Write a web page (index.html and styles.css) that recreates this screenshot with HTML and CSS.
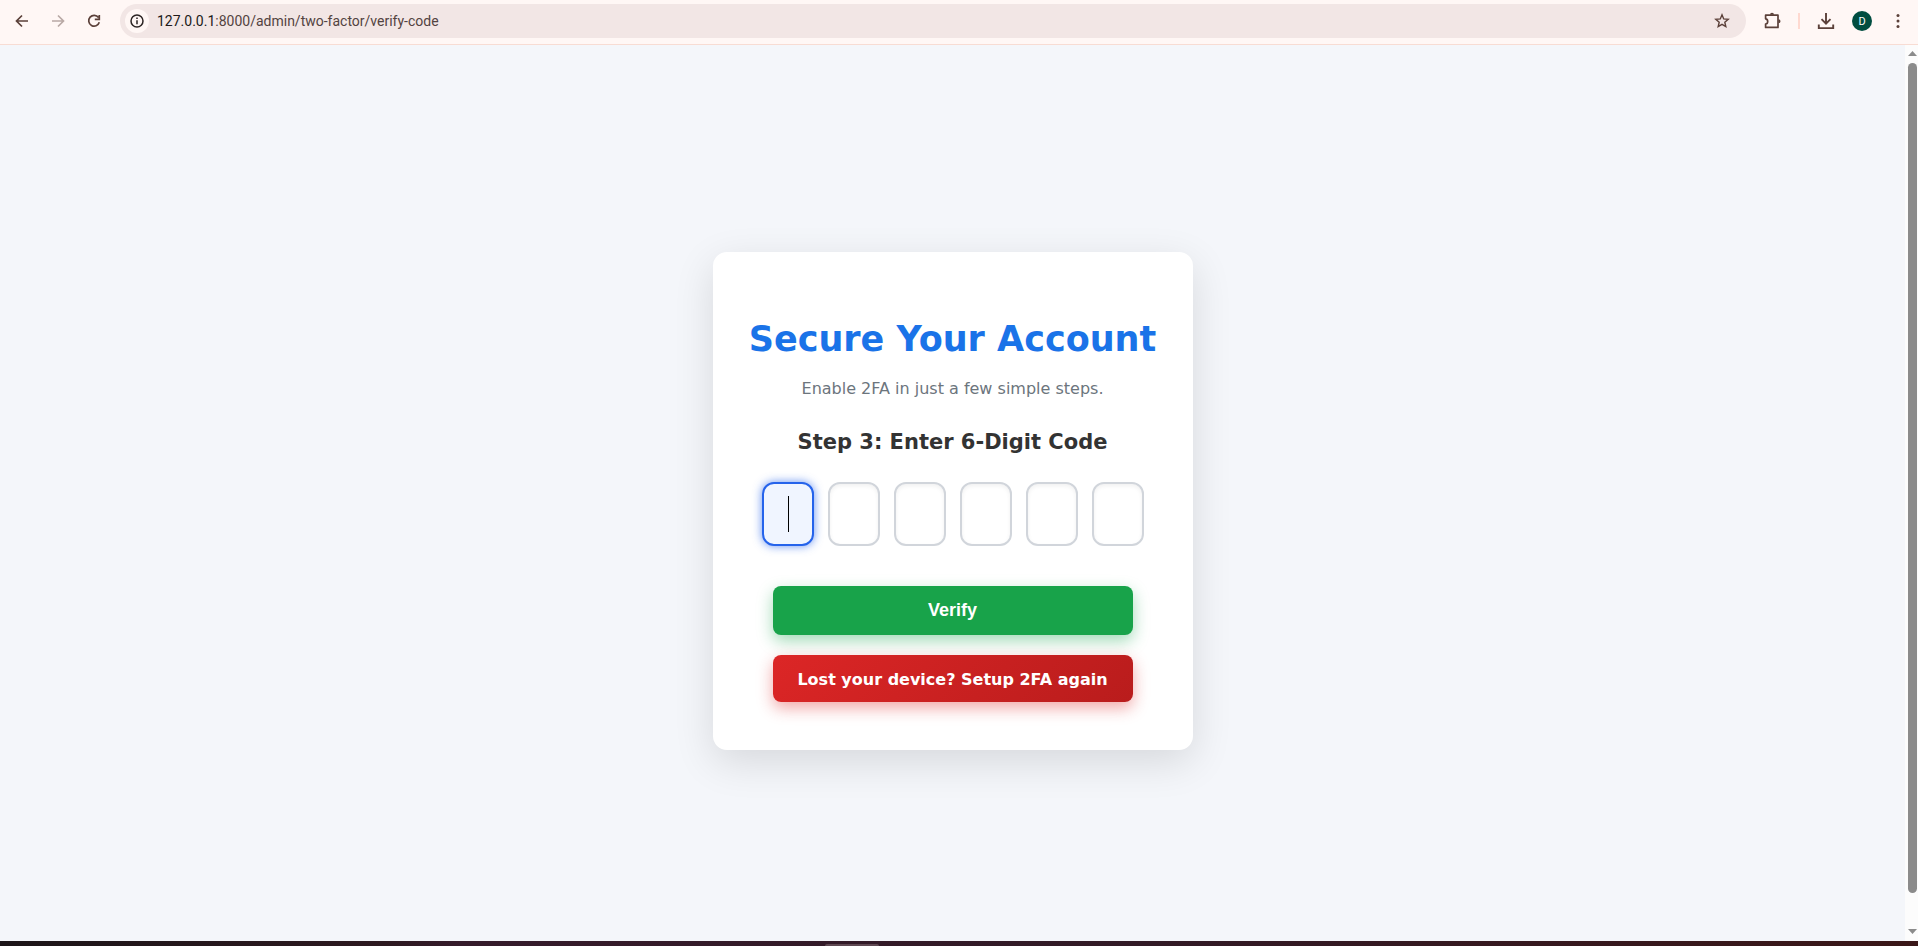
FILE: index.html
```
<!DOCTYPE html>
<html lang="en">
<head>
    <meta charset="UTF-8">
    <meta name="viewport" content="width=device-width, initial-scale=1.0">
    <title>Verify Code</title>
    <link rel="stylesheet" href="styles.css">
</head>
<body>

    <header class="toolbar">
        <nav class="nav-buttons">
            <button type="button" class="icon-btn" aria-label="Back">
                <svg width="20" height="20" viewBox="0 0 20 20" fill="none" stroke="currentColor" stroke-width="1.7"><path d="M16 10H5M10 4.5L4.5 10l5.500 5.500"/></svg>
            </button>
            <button type="button" class="icon-btn disabled" aria-label="Forward">
                <svg width="20" height="20" viewBox="0 0 20 20" fill="none" stroke="currentColor" stroke-width="1.7"><path d="M4 10h11M10 4.500l5.500 5.500-5.500 5.500"/></svg>
            </button>
            <button type="button" class="icon-btn" aria-label="Reload">
                <svg width="20" height="20" viewBox="0 0 20 20" fill="none" stroke="currentColor" stroke-width="1.7"><path d="M14.500 6.500A5.400 5.400 0 1 0 15.300 11.300M15.300 4v4.300h-4.500"/></svg>
            </button>
        </nav>
        <div class="address-bar">
            <button type="button" class="site-info" aria-label="Site information">
                <svg width="16" height="16" viewBox="0 0 16 16" fill="none" stroke="currentColor" stroke-width="1.5"><circle cx="8" cy="8" r="6"/><path d="M8 7.300v4M8 4.500v1.500"/></svg>
            </button>
            <p class="url"><span class="host">127.0.0.1</span>:8000/admin/two-factor/verify-code</p>
            <button type="button" class="icon-btn" aria-label="Bookmark">
                <svg width="20" height="20" viewBox="0 0 20 20" fill="none" stroke="currentColor" stroke-width="1.4"><path d="M10 3.800l1.700 4.100 4.500.4-3.400 2.900 1 4.400-3.800-2.300-3.800 2.300 1-4.400-3.400-2.900 4.500-.4z"/></svg>
            </button>
        </div>
        <div class="actions">
            <button type="button" class="icon-btn" aria-label="Extensions">
                <svg width="20" height="20" viewBox="0 0 20 20" fill="none" stroke="currentColor" stroke-width="1.7"><path d="M3.600 4.200H16V16.400H3.600V13C6.400 12.600 6.400 8.200 3.600 7.800Z" stroke-linejoin="round"/><path d="M8 3.800a2 2 0 0 1 4 0zM16.500 8.200a2 2 0 0 1 0 4z" fill="currentColor" stroke="none"/></svg>
            </button>
            <span class="divider"></span>
            <button type="button" class="icon-btn" aria-label="Downloads">
                <svg width="20" height="20" viewBox="0 0 20 20" fill="none" stroke="currentColor" stroke-width="1.9"><path d="M10 2v10.500M5.500 8.200l4.500 4.500 4.500-4.500M2.800 13.500v3.600h14.400v-3.600"/></svg>
            </button>
            <button type="button" class="avatar">D</button>
            <button type="button" class="icon-btn" aria-label="Menu">
                <svg width="20" height="20" viewBox="0 0 20 20" fill="currentColor"><circle cx="10" cy="4.500" r="1.500"/><circle cx="10" cy="10" r="1.500"/><circle cx="10" cy="15.500" r="1.500"/></svg>
            </button>
        </div>
    </header>

    <div class="viewport">
        <main class="page">
            <div class="card">
                <h1>Secure Your Account</h1>
                <p class="subtitle">Enable 2FA in just a few simple steps.</p>
                <h2>Step 3: Enter 6-Digit Code</h2>
                <form id="verifyForm">
                    <div class="code-inputs">
                        <input type="text" class="code-input active" maxlength="1" aria-label="Digit 1">
                        <input type="text" class="code-input" maxlength="1" aria-label="Digit 2">
                        <input type="text" class="code-input" maxlength="1" aria-label="Digit 3">
                        <input type="text" class="code-input" maxlength="1" aria-label="Digit 4">
                        <input type="text" class="code-input" maxlength="1" aria-label="Digit 5">
                        <input type="text" class="code-input" maxlength="1" aria-label="Digit 6">
                    </div>
                    <button type="submit" class="verify-btn">Verify</button>
                </form>
                <a href="#" class="reset-btn">Lost your device? Setup 2FA again</a>
            </div>
        </main>
        <div class="scrollbar">
            <svg width="9" height="5" viewBox="0 0 9 5"><path d="M0 5L4.500 0 9 5z"/></svg>
            <div class="track"><div class="thumb"></div></div>
            <svg width="9" height="5" viewBox="0 0 9 5"><path d="M0 0h9L4.500 5z"/></svg>
        </div>
    </div>

    <footer class="dock"><span class="dock-handle"></span></footer>

</body>
</html>
```
FILE: styles.css
```
* {
    box-sizing: border-box;
}

body {
    margin: 0;
    height: 100vh;
    display: flex;
    flex-direction: column;
    overflow: hidden;
    font-family: "DejaVu Sans", sans-serif;
    background-color: #f4f6fa;
}

button {
    border: none;
    padding: 0;
    cursor: pointer;
}

/* Browser toolbar */
.toolbar {
    display: flex;
    align-items: center;
    height: 45px;
    padding: 0 10px 2px 12px;
    background-color: #fff7f5;
    border-bottom: 1px solid #f8dcd3;
}

.nav-buttons {
    display: flex;
    gap: 16px;
    margin-right: 16px;
}

.icon-btn {
    display: flex;
    width: 20px;
    height: 20px;
    background: none;
    color: #5b4039;
}

.icon-btn.disabled {
    color: #b9a9a5;
}

.address-bar {
    flex: 1;
    display: flex;
    align-items: center;
    height: 34px;
    padding: 0 14px 0 5px;
    border-radius: 17px;
    background-color: #f2e6e5;
}

.site-info {
    display: flex;
    align-items: center;
    justify-content: center;
    width: 24px;
    height: 24px;
    border-radius: 50%;
    background-color: #fff7f5;
    color: #2b2423;
}

.url {
    flex: 1;
    margin: 0 0 0 8px;
    font-family: Roboto, sans-serif;
    font-size: 14px;
    line-height: 20px;
    color: #534341;
}

.host {
    color: #201a19;
}

.actions {
    display: flex;
    align-items: center;
    margin-left: 16px;
}

.divider {
    width: 2px;
    height: 16px;
    margin: 0 16px;
    background-color: #ffd9d0;
}

.avatar {
    width: 20px;
    height: 20px;
    margin: 0 16px;
    border-radius: 50%;
    background-color: #004d40;
    color: #fff;
    font-family: Roboto, sans-serif;
    font-size: 11px;
}

/* Page */
.viewport {
    flex: 1;
    display: flex;
    min-height: 0;
}

.page {
    flex: 1;
    display: flex;
    align-items: center;
    justify-content: center;
    padding-top: 16px;
}

.card {
    width: 480px;
    padding: 67px 32px 48px;
    border-radius: 14px;
    background-color: #fff;
    box-shadow: 0 12px 40px rgba(0, 0, 0, 0.12);
    text-align: center;
}

h1 {
    margin: 0 0 19px;
    font-size: 35px;
    line-height: 41px;
    color: #1a73e8;
    white-space: nowrap;
}

.subtitle {
    margin: 0 0 32px;
    font-size: 16px;
    line-height: 19px;
    color: #6c757d;
}

h2 {
    margin: 0 0 28px;
    font-size: 21px;
    line-height: 24px;
    color: #333;
}

.code-inputs {
    display: flex;
    justify-content: center;
    gap: 14px;
    margin-bottom: 40px;
}

.code-input {
    width: 52px;
    height: 64px;
    padding: 0;
    border: 2px solid #d1d5db;
    border-radius: 12px;
    background-color: #fff;
    box-shadow: inset 0 2px 4px rgba(0, 0, 0, 0.06);
    font-size: 28px;
    text-align: center;
    outline: none;
}

/* active box shows a steady text cursor */
.code-input.active {
    border-color: #2563eb;
    background: #f0f5ff linear-gradient(#000, #000) 24px center / 1px 36px no-repeat;
    box-shadow: 0 0 10px rgba(37, 99, 235, 0.7);
    caret-color: transparent;
}

.verify-btn,
.reset-btn {
    display: block;
    width: 360px;
    margin: 0 auto;
    border-radius: 8px;
    color: #fff;
    font-weight: bold;
}

.verify-btn {
    padding: 14px;
    margin-bottom: 20px;
    background-color: #18a34a;
    box-shadow: 0 6px 16px rgba(22, 163, 74, 0.4);
    font-family: "Liberation Sans", sans-serif;
    font-size: 18px;
    line-height: 21px;
}

.reset-btn {
    padding: 15px 14px 13px;
    background: linear-gradient(135deg, #dc2626, #b91c1c);
    box-shadow: 0 6px 16px rgba(220, 38, 38, 0.4);
    font-size: 16px;
    line-height: 19px;
    text-decoration: none;
    white-space: nowrap;
}

.scrollbar {
    display: flex;
    flex-direction: column;
    align-items: center;
    width: 13px;
    padding: 6px 0 7px 2px;
    background-color: #fcfcfc;
    fill: #8b8b8b;
}

.track {
    flex: 1;
    padding: 7px 0 36px;
}

.thumb {
    width: 9px;
    height: 100%;
    border-radius: 5px;
    background-color: #8b8b8b;
}

.dock {
    display: flex;
    align-items: flex-end;
    height: 5px;
    padding-left: 43%;
    background: linear-gradient(90deg, #1c1518, #2d1920 20%, #351b2b 24%, #321a26 60%, #3a1718);
}

.dock-handle {
    width: 54px;
    height: 2px;
    border-radius: 2px 2px 0 0;
    background-color: #5f4852;
}
```
